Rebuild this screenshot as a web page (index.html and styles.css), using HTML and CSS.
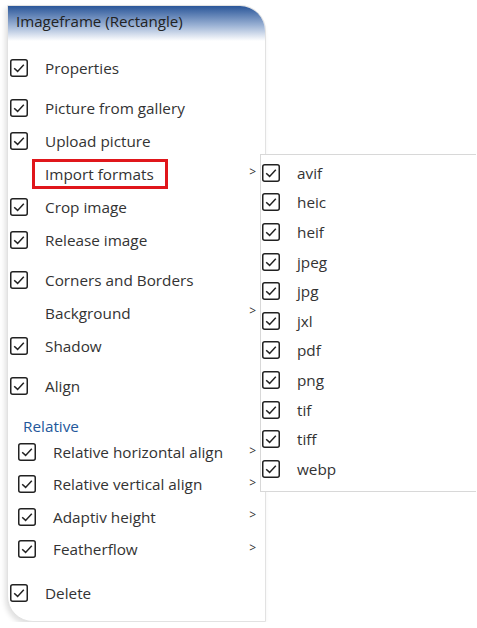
FILE: index.html
```html
<!DOCTYPE html>
<html lang="en">
<head>
  <meta charset="UTF-8" />
  <meta name="viewport" content="width=device-width, initial-scale=1.0"/>
  <title>Imageframe menu</title>
  <link rel="stylesheet" href="styles.css">
</head>
<body>

  <div class="panel">
    <div class="panel-head">Imageframe (Rectangle)</div>

    <div class="menu">
      <div class="group g-first">
        <div class="item"><span class="check"><svg viewBox="0 0 18 18"><rect x="0.75" y="0.75" width="16.5" height="16.5" rx="2"/><path d="M4.2 9.2 L7.6 12.4 L13.8 5.8"/></svg></span><span class="label">Properties</span></div>
      </div>

      <div class="group">
        <div class="item"><span class="check"><svg viewBox="0 0 18 18"><rect x="0.75" y="0.75" width="16.5" height="16.5" rx="2"/><path d="M4.2 9.2 L7.6 12.4 L13.8 5.8"/></svg></span><span class="label">Picture from gallery</span></div>
        <div class="item"><span class="check"><svg viewBox="0 0 18 18"><rect x="0.75" y="0.75" width="16.5" height="16.5" rx="2"/><path d="M4.2 9.2 L7.6 12.4 L13.8 5.8"/></svg></span><span class="label">Upload picture</span></div>
        <div class="item"><span class="check"></span><span class="label highlight">Import formats</span><span class="arrow">&gt;</span></div>
        <div class="item"><span class="check"><svg viewBox="0 0 18 18"><rect x="0.75" y="0.75" width="16.5" height="16.5" rx="2"/><path d="M4.2 9.2 L7.6 12.4 L13.8 5.8"/></svg></span><span class="label">Crop image</span></div>
        <div class="item"><span class="check"><svg viewBox="0 0 18 18"><rect x="0.75" y="0.75" width="16.5" height="16.5" rx="2"/><path d="M4.2 9.2 L7.6 12.4 L13.8 5.8"/></svg></span><span class="label">Release image</span></div>
      </div>

      <div class="group">
        <div class="item"><span class="check"><svg viewBox="0 0 18 18"><rect x="0.75" y="0.75" width="16.5" height="16.5" rx="2"/><path d="M4.2 9.2 L7.6 12.4 L13.8 5.8"/></svg></span><span class="label">Corners and Borders</span></div>
        <div class="item"><span class="check"></span><span class="label">Background</span><span class="arrow">&gt;</span></div>
        <div class="item"><span class="check"><svg viewBox="0 0 18 18"><rect x="0.75" y="0.75" width="16.5" height="16.5" rx="2"/><path d="M4.2 9.2 L7.6 12.4 L13.8 5.8"/></svg></span><span class="label">Shadow</span></div>
      </div>

      <div class="group">
        <div class="item"><span class="check"><svg viewBox="0 0 18 18"><rect x="0.75" y="0.75" width="16.5" height="16.5" rx="2"/><path d="M4.2 9.2 L7.6 12.4 L13.8 5.8"/></svg></span><span class="label">Align</span></div>
      </div>

      <div class="group sub-group">
        <div class="group-title">Relative</div>
        <div class="item sub"><span class="check"><svg viewBox="0 0 18 18"><rect x="0.75" y="0.75" width="16.5" height="16.5" rx="2"/><path d="M4.2 9.2 L7.6 12.4 L13.8 5.8"/></svg></span><span class="label">Relative horizontal align</span><span class="arrow">&gt;</span></div>
        <div class="item sub"><span class="check"><svg viewBox="0 0 18 18"><rect x="0.75" y="0.75" width="16.5" height="16.5" rx="2"/><path d="M4.2 9.2 L7.6 12.4 L13.8 5.8"/></svg></span><span class="label">Relative vertical align</span><span class="arrow">&gt;</span></div>
        <div class="item sub"><span class="check"><svg viewBox="0 0 18 18"><rect x="0.75" y="0.75" width="16.5" height="16.5" rx="2"/><path d="M4.2 9.2 L7.6 12.4 L13.8 5.8"/></svg></span><span class="label">Adaptiv height</span><span class="arrow">&gt;</span></div>
        <div class="item sub"><span class="check"><svg viewBox="0 0 18 18"><rect x="0.75" y="0.75" width="16.5" height="16.5" rx="2"/><path d="M4.2 9.2 L7.6 12.4 L13.8 5.8"/></svg></span><span class="label">Featherflow</span><span class="arrow">&gt;</span></div>
      </div>

      <div class="group g-last">
        <div class="item"><span class="check"><svg viewBox="0 0 18 18"><rect x="0.75" y="0.75" width="16.5" height="16.5" rx="2"/><path d="M4.2 9.2 L7.6 12.4 L13.8 5.8"/></svg></span><span class="label">Delete</span></div>
      </div>
    </div>
  </div>

  <div class="submenu">
    <div class="item"><span class="check"><svg viewBox="0 0 18 18"><rect x="0.75" y="0.75" width="16.5" height="16.5" rx="2"/><path d="M4.2 9.2 L7.6 12.4 L13.8 5.8"/></svg></span><span class="label">avif</span></div>
    <div class="item"><span class="check"><svg viewBox="0 0 18 18"><rect x="0.75" y="0.75" width="16.5" height="16.5" rx="2"/><path d="M4.2 9.2 L7.6 12.4 L13.8 5.8"/></svg></span><span class="label">heic</span></div>
    <div class="item"><span class="check"><svg viewBox="0 0 18 18"><rect x="0.75" y="0.75" width="16.5" height="16.5" rx="2"/><path d="M4.2 9.2 L7.6 12.4 L13.8 5.8"/></svg></span><span class="label">heif</span></div>
    <div class="item"><span class="check"><svg viewBox="0 0 18 18"><rect x="0.75" y="0.75" width="16.5" height="16.5" rx="2"/><path d="M4.2 9.2 L7.6 12.4 L13.8 5.8"/></svg></span><span class="label">jpeg</span></div>
    <div class="item"><span class="check"><svg viewBox="0 0 18 18"><rect x="0.75" y="0.75" width="16.5" height="16.5" rx="2"/><path d="M4.2 9.2 L7.6 12.4 L13.8 5.8"/></svg></span><span class="label">jpg</span></div>
    <div class="item"><span class="check"><svg viewBox="0 0 18 18"><rect x="0.75" y="0.75" width="16.5" height="16.5" rx="2"/><path d="M4.2 9.2 L7.6 12.4 L13.8 5.8"/></svg></span><span class="label">jxl</span></div>
    <div class="item"><span class="check"><svg viewBox="0 0 18 18"><rect x="0.75" y="0.75" width="16.5" height="16.5" rx="2"/><path d="M4.2 9.2 L7.6 12.4 L13.8 5.8"/></svg></span><span class="label">pdf</span></div>
    <div class="item"><span class="check"><svg viewBox="0 0 18 18"><rect x="0.75" y="0.75" width="16.5" height="16.5" rx="2"/><path d="M4.2 9.2 L7.6 12.4 L13.8 5.8"/></svg></span><span class="label">png</span></div>
    <div class="item"><span class="check"><svg viewBox="0 0 18 18"><rect x="0.75" y="0.75" width="16.5" height="16.5" rx="2"/><path d="M4.2 9.2 L7.6 12.4 L13.8 5.8"/></svg></span><span class="label">tif</span></div>
    <div class="item"><span class="check"><svg viewBox="0 0 18 18"><rect x="0.75" y="0.75" width="16.5" height="16.5" rx="2"/><path d="M4.2 9.2 L7.6 12.4 L13.8 5.8"/></svg></span><span class="label">tiff</span></div>
    <div class="item"><span class="check"><svg viewBox="0 0 18 18"><rect x="0.75" y="0.75" width="16.5" height="16.5" rx="2"/><path d="M4.2 9.2 L7.6 12.4 L13.8 5.8"/></svg></span><span class="label">webp</span></div>
  </div>

</body>
</html>
```

FILE: styles.css
```css
body {
  margin: 0;
  font-family: "Open Sans", Lato, sans-serif;
  background-color: white;
  color: #333;
}

.panel {
  position: relative;
  margin: 5px 0 0 7px;
  width: 257px;
  border: 1px solid #e2e2e2;
  border-radius: 0 26px 0 26px;
  background: white;
  box-shadow: -2px 3px 5px rgba(0,0,0,0.12);
  padding-bottom: 12px;
}

.panel-head {
  height: 35px;
  padding-left: 8px;
  line-height: 31px;
  font-size: 15.1px;
  color: #222;
  border-radius: 0 25px 0 0;
  background: linear-gradient(to bottom, #2a5699, #9ab1d4 55%, #ffffff);
}

.menu {
  padding-top: 10px;
}

.group {
  margin-top: 7px;
}

.group.g-first {
  margin-top: 0;
}

.group.sub-group {
  margin-top: 14px;
}

.group.g-last {
  margin-top: 11px;
}

.item {
  display: flex;
  align-items: center;
  height: 33px;
  padding-left: 2px;
  padding-right: 9px;
  font-size: 15.3px;
}

.item.sub {
  height: 32.3px;
  padding-left: 10px;
}

.check {
  width: 18px;
  height: 18px;
  flex-shrink: 0;
  margin-right: 17px;
}

.check svg {
  display: block;
  width: 18px;
  height: 18px;
  fill: none;
  stroke: #222;
  stroke-width: 1.5;
}

.label {
  flex: 1;
  white-space: nowrap;
}

.label.highlight {
  flex: 0 0 auto;
  margin-left: -13px;
  padding: 2px 11px 2px 10px;
  border: 3px solid #e0161b;
  margin-right: auto;
}

.arrow {
  font-size: 12px;
  color: #333;
  margin-top: -4px;
}

.group-title {
  height: 20px;
  line-height: 20px;
  padding-left: 15px;
  font-size: 15.3px;
  color: #23589b;
}

.submenu {
  position: absolute;
  top: 154px;
  left: 260px;
  width: 216px;
  height: 338px;
  padding-top: 3px;
  box-sizing: border-box;
  background: white;
  border: 1px solid #d8d8d8;
  border-right: none;
}

.submenu .item {
  height: 29.6px;
  padding-left: 1px;
}
```
